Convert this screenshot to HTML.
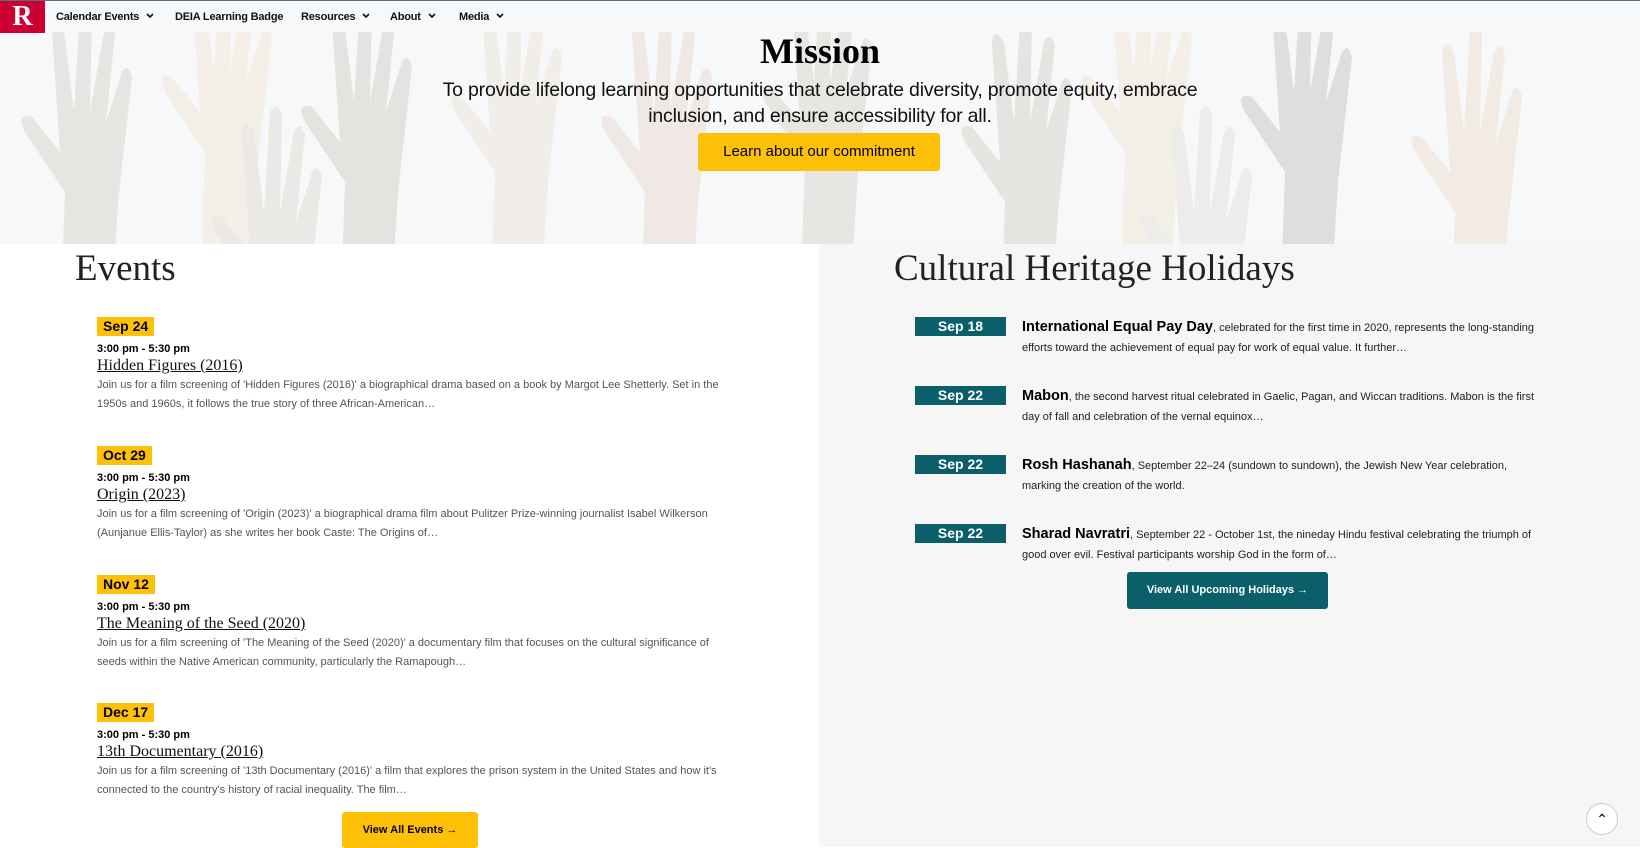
<!DOCTYPE html>
<html><head><meta charset="utf-8"><style>
*{box-sizing:border-box;margin:0;padding:0}
body{width:1640px;height:847px;overflow:hidden;background:#fff;font-family:"Liberation Sans",sans-serif;color:#000;position:relative}
.nav{position:absolute;top:0;left:0;width:1640px;height:32px;background:#f7f8fa;z-index:3;border-top:1px solid #5a6b7a}
.logo{position:absolute;left:0;top:0;width:45px;height:32px;background:#cc0033;color:#fff;font:900 28px/32px "Liberation Serif",serif;text-align:center}
.nav span.i{position:absolute;top:10px;font-size:11px;font-weight:bold;color:#111;letter-spacing:-0.2px}
.nav svg{margin-left:7px;vertical-align:1px}
.hero{position:absolute;top:32px;left:0;width:1640px;height:212px;background:#f7f8fa;overflow:hidden}
.hero svg{position:absolute;left:0;top:0}
h1{position:absolute;top:30px;left:0;width:1640px;text-align:center;font:bold 36px "Liberation Serif",serif;z-index:2}
.sub{position:absolute;top:77px;left:405px;width:830px;text-align:center;font-size:19.5px;line-height:26px;z-index:2;color:#111;letter-spacing:-0.2px}
.btn1{position:absolute;left:698px;top:133px;width:242px;height:38px;background:#ffc107;border-radius:3px;font-size:15px;line-height:38px;text-align:center;z-index:2}
.right{position:absolute;left:819px;top:244px;width:821px;height:603px;background:#f6f6f6}
.h2{position:absolute;font:37px "Liberation Serif",serif;color:#222}
.ev{position:absolute;left:97px;width:640px}
.ev .d{display:inline-block;background:#ffc107;font-weight:bold;font-size:14px;padding:0 6px;height:19px;line-height:19px}
.ev .t{font-size:11px;font-weight:bold;margin-top:7px}
.ev .n{font:16px "Liberation Serif",serif;text-decoration:underline;margin-top:2px;color:#111}
.ev .p{font-size:11px;line-height:19px;color:#555;margin-top:1px}
.ho{position:absolute;left:915px;width:640px}
.ho .d{position:absolute;left:0;top:0;width:91px;height:19px;background:#0b5f6b;color:#fff;font-weight:bold;font-size:14px;line-height:19px;text-align:center}
.ho .x{position:absolute;left:107px;top:0;width:520px;font-size:11px;line-height:20px;color:#222}
.ho .x b{font-size:14.5px;color:#000}
.btn2{position:absolute;left:1127px;top:572px;width:201px;height:37px;background:#0b5f6b;color:#fff;border-radius:3px;font-size:11px;font-weight:bold;line-height:37px;text-align:center}
.btn3{position:absolute;left:342px;top:812px;width:136px;height:36px;background:#ffc107;border-radius:3px;font-size:11px;font-weight:bold;line-height:36px;text-align:center}
.top{position:absolute;left:1586px;top:803px;width:32px;height:32px;border-radius:50%;background:#fff;border:1px solid #ccc;text-align:center;line-height:30px;font-size:14px}
</style></head><body>
<div class="nav"><div class="logo">R</div>
<span class="i" style="left:56px">Calendar Events<svg width="8" height="6" viewBox="0 0 8 6"><path d="M1 1l3 3 3-3" stroke="#111" stroke-width="1.6" fill="none"/></svg></span>
<span class="i" style="left:175px">DEIA Learning Badge</span>
<span class="i" style="left:301px">Resources<svg width="8" height="6" viewBox="0 0 8 6"><path d="M1 1l3 3 3-3" stroke="#111" stroke-width="1.6" fill="none"/></svg></span>
<span class="i" style="left:390px">About<svg width="8" height="6" viewBox="0 0 8 6"><path d="M1 1l3 3 3-3" stroke="#111" stroke-width="1.6" fill="none"/></svg></span>
<span class="i" style="left:459px">Media<svg width="8" height="6" viewBox="0 0 8 6"><path d="M1 1l3 3 3-3" stroke="#111" stroke-width="1.6" fill="none"/></svg></span></div>
<div class="hero">
<svg width="1640" height="212" viewBox="0 0 1640 212">
<defs><path id="h" d="M0 260 L5 120 L-35 60 Q-45 40 -28 45 L0 80 L-8 -40 Q-6 -55 4 -40 L14 40 L20 -60 Q26 -72 32 -58 L30 40 L44 -40 Q50 -52 55 -38 L46 50 L62 0 Q68 -10 72 5 L58 130 L50 260Z"/></defs>
<use href="#h" x="60" y="40" fill="#e6e5e2"/>
<use href="#h" x="200" y="0" fill="#f4efe6"/>
<use href="#h" x="340" y="30" fill="#e4e3e0"/>
<use href="#h" x="490" y="20" fill="#f1eeea"/>
<use href="#h" x="640" y="40" fill="#efe8e4"/>
<use href="#h" x="800" y="10" fill="#e7e6e3"/>
<use href="#h" x="1000" y="50" fill="#e5e4e1"/>
<use href="#h" x="1120" y="0" fill="#f3eee6"/>
<use href="#h" x="1280" y="20" fill="#dedede"/>
<use href="#h" x="1450" y="60" fill="#f2ebe4"/>
<use href="#h" x="250" y="140" fill="#ebe9e6"/>
<use href="#h" x="1180" y="140" fill="#ececeb"/>
</svg></div>
<h1>Mission</h1>
<div class="sub">To provide lifelong learning opportunities that celebrate diversity, promote equity, embrace<br>inclusion, and ensure accessibility for all.</div>
<div class="btn1">Learn about our commitment</div>
<div class="right"></div>
<div class="h2" style="left:75px;top:247px">Events</div>
<div class="h2" style="left:894px;top:247px">Cultural Heritage Holidays</div>

<div class="ev" style="top:317px"><span class="d">Sep 24</span><div class="t">3:00 pm - 5:30 pm</div><div class="n">Hidden Figures (2016)</div><div class="p">Join us for a film screening of 'Hidden Figures (2016)' a biographical drama based on a book by Margot Lee Shetterly. Set in the 1950s and 1960s, it follows the true story of three African-American…</div></div>
<div class="ev" style="top:446px"><span class="d">Oct 29</span><div class="t">3:00 pm - 5:30 pm</div><div class="n">Origin (2023)</div><div class="p">Join us for a film screening of 'Origin (2023)' a biographical drama film about Pulitzer Prize-winning journalist Isabel Wilkerson (Aunjanue Ellis-Taylor) as she writes her book Caste: The Origins of…</div></div>
<div class="ev" style="top:575px"><span class="d">Nov 12</span><div class="t">3:00 pm - 5:30 pm</div><div class="n">The Meaning of the Seed (2020)</div><div class="p">Join us for a film screening of 'The Meaning of the Seed (2020)' a documentary film that focuses on the cultural significance of seeds within the Native American community, particularly the Ramapough…</div></div>
<div class="ev" style="top:703px"><span class="d">Dec 17</span><div class="t">3:00 pm - 5:30 pm</div><div class="n">13th Documentary (2016)</div><div class="p">Join us for a film screening of '13th Documentary (2016)' a film that explores the prison system in the United States and how it's connected to the country's history of racial inequality. The film…</div></div>

<div class="ho" style="top:317px"><div class="d">Sep 18</div><div class="x"><b>International Equal Pay Day</b>, celebrated for the first time in 2020, represents the long-standing efforts toward the achievement of equal pay for work of equal value. It further…</div></div>
<div class="ho" style="top:386px"><div class="d">Sep 22</div><div class="x"><b>Mabon</b>, the second harvest ritual celebrated in Gaelic, Pagan, and Wiccan traditions. Mabon is the first day of fall and celebration of the vernal equinox…</div></div>
<div class="ho" style="top:455px"><div class="d">Sep 22</div><div class="x"><b>Rosh Hashanah</b>, September 22–24 (sundown to sundown), the Jewish New Year celebration, marking the creation of the world.</div></div>
<div class="ho" style="top:524px"><div class="d">Sep 22</div><div class="x"><b>Sharad Navratri</b>, September 22 - October 1st, the nineday Hindu festival celebrating the triumph of good over evil. Festival participants worship God in the form of…</div></div>
<div class="btn2">View All Upcoming Holidays →</div>
<div class="btn3">View All Events →</div>
<div class="top">⌃</div>
</body></html>
